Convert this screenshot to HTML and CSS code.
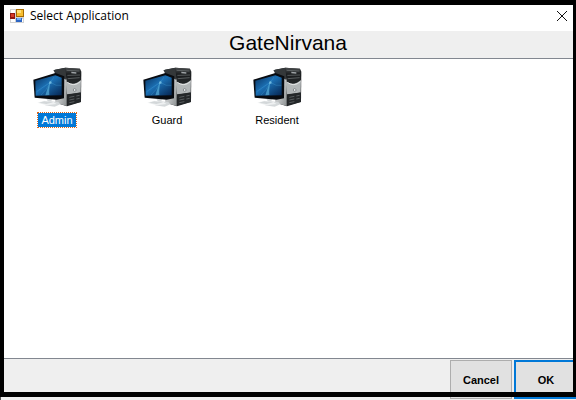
FILE: index.html
```html
<!DOCTYPE html>
<html lang="en">
<head>
<meta charset="utf-8">
<title>Select Application</title>
<link rel="stylesheet" href="styles.css">
</head>
<body>
<svg class="defs" aria-hidden="true">
  <defs>
    <linearGradient id="screen" x1="0" y1="0" x2="1" y2="1">
      <stop offset="0" stop-color="#08315f"/><stop offset=".45" stop-color="#1c70b4"/><stop offset="1" stop-color="#052450"/>
    </linearGradient>
    <linearGradient id="side" x1="0" y1="0" x2="1" y2="1">
      <stop offset="0" stop-color="#777b7d"/><stop offset=".5" stop-color="#c6c9ca"/><stop offset="1" stop-color="#8b8f90"/>
    </linearGradient>
    <linearGradient id="drive" x1="0" y1="0" x2="0" y2="1">
      <stop offset="0" stop-color="#4a4d4f"/><stop offset=".45" stop-color="#191b1d"/><stop offset="1" stop-color="#25282a"/>
    </linearGradient>
    <symbol id="computer" viewBox="21 15 147 120">
      <path d="M86 23 118 17 162 20 166 29 165 120 123 133 90 122Z" fill="#202325"/>
      <path d="M88 34 116 42 122 52 122 132 88 122Z" fill="url(#side)"/>
      <path d="M82 25 118 17 122 54 92 40Z" fill="#34383a"/>
      <path d="M118 17 162 20 165 58 124 62Z" fill="url(#drive)"/>
      <path d="M122 25 160 27M124 40 162 39M125 50 161 47" stroke="#72787a" stroke-width="2"/>
      <path d="M136 29 151 31 151 35 136 34Z" fill="#9da2a5"/>
      <path d="M119 58Q143 74 165 54L164 92 123 97Z" fill="#b3b7b8"/>
      <path d="M124 61Q144 76 163 59" stroke="#e3e5e5" stroke-width="3" fill="none"/>
      <circle cx="146" cy="84" r="4" fill="#f4f5f5" stroke="#686d70" stroke-width="2"/>
      <path d="M125 98 164 91 164 120 125 130Z" fill="#242729"/>
      <path d="M130 106 145 103M130 114 145 111M130 122 145 119M151 102 161 100M151 111 161 109" stroke="#717678" stroke-width="2"/>
      <path d="M61 110 78 111 76 118 98 121 103 127 86 134 57 130 68 122Z" fill="#d5d9db"/>
      <path d="M34 122 54 116 83 120 91 126 62 130Z" fill="#eef0f1"/>
      <path d="M39 122 55 118 82 121 61 126Z" fill="#d3d7d9"/>
      <path d="M22 53 88 33 115 43 114 109 92 113 26 107Z" fill="#080b10"/>
      <path d="M28 56 88 40 107 47 107 100 29 101Z" fill="url(#screen)"/>
      <path d="M58 100Q65 77 74 54Q68 84 70 99Z" fill="#69c8ef" opacity=".55"/>
      <path d="M32 89Q48 77 73 61Q91 74 106 70M45 99Q61 85 73 61L84 45" stroke="#54b4e5" stroke-width="2" opacity=".4" fill="none"/>
      <circle cx="73" cy="62" r="4" fill="#a8e5fa" opacity=".5"/>
    </symbol>
  </defs>
</svg>
<main class="window">
  <header class="titlebar">
    <svg class="form-icon" viewBox="0 0 14 14" aria-hidden="true">
      <path d="M0 0h14v14H0z" fill="#d2d2d2"/>
      <path d="M1 1h4v3H1zM1 10h4v3H1zM12 10h1v3h-1z" fill="#fff"/>
      <path d="M6 0h8v8H6z" fill="#a66a00"/><path d="M7 1h6v6H7z" fill="#f6bd2f"/><path d="M7 1h4v3H7z" fill="#ffe07a"/>
      <path d="M0 4h5v6H0z" fill="#8f1710"/><path d="M1 5h3v3H1z" fill="#d63a28"/>
      <path d="M6 9h6v4H6z" fill="#2d66c4"/><path d="M7 9h4v2H7z" fill="#72adf7"/>
    </svg>
    <span class="caption">Select Application</span>
    <button class="close" type="button" aria-label="Close">
      <svg viewBox="0 0 12 12" aria-hidden="true"><path d="M1 1 11 11M11 1 1 11"/></svg>
    </button>
  </header>
  <h1 class="heading">GateNirvana</h1>
  <section class="apps" aria-label="Applications">
    <button class="app selected" type="button" aria-pressed="true"><svg class="computer" aria-hidden="true"><use href="#computer"/></svg><span class="name">Admin</span></button>
    <button class="app" type="button" aria-pressed="false"><svg class="computer" aria-hidden="true"><use href="#computer"/></svg><span class="name">Guard</span></button>
    <button class="app" type="button" aria-pressed="false"><svg class="computer" aria-hidden="true"><use href="#computer"/></svg><span class="name">Resident</span></button>
  </section>
  <footer class="actions">
    <button class="action" type="button">Cancel</button>
    <button class="action default" type="button">OK</button>
  </footer>
  <div class="frame"></div>
</main>
</body>
</html>
```
FILE: styles.css
```css
* { box-sizing: border-box; }
body { margin: 0; background: #efefef; color: #000; font-family: "Liberation Sans", Arial, sans-serif; }
button { padding: 0; border: 0; background: none; color: inherit; font: inherit; }
.defs { position: absolute; width: 0; height: 0; }
.window { position: relative; display: flex; flex-direction: column; min-height: 100vh; padding-top: 5px; }
.titlebar { display: flex; align-items: center; height: 26px; padding: 0 8px 4px 10px; background: #fff; }
.form-icon { width: 14px; height: 14px; }
.caption { margin-left: 6px; font: 12px/16px "Open Sans", "Noto Sans", sans-serif; }
.close { display: flex; margin-left: auto; }
.close svg { width: 12px; height: 12px; fill: none; stroke: #111; stroke-width: 1; }
.heading { margin: 0; height: 28px; border-bottom: 1px solid #828790; font-size: 21px; line-height: 24px; font-weight: 400; text-align: center; }
.apps { flex: 1; display: grid; grid-template-columns: repeat(auto-fill, 110px); align-content: start; padding: 8px 2px; background: #fff; }
.app { display: flex; flex-direction: column; align-items: center; gap: 5px; }
.computer { width: 49px; height: 40px; }
.name { padding: 1px 3px; border: 1px dotted transparent; font-size: 11px; line-height: 12px; }
.selected .name { background: #0078d7 padding-box; border-color: #d9661c; color: #fff; }
.actions { display: flex; justify-content: flex-end; gap: 2px; height: 42px; padding: 1px 0; border-top: 1px solid #828790; border-left: 1px solid #555; }
.action { width: 62px; height: 39px; border: 1px solid #adadad; background: #e1e1e1; font-size: 11px; font-weight: 700; }
.default { border: 2px solid #0078d7; border-right: 0; }
.frame { position: absolute; inset: 0 0 3px; border: solid #000; border-width: 5px 3px 5px 4px; pointer-events: none; }
```
